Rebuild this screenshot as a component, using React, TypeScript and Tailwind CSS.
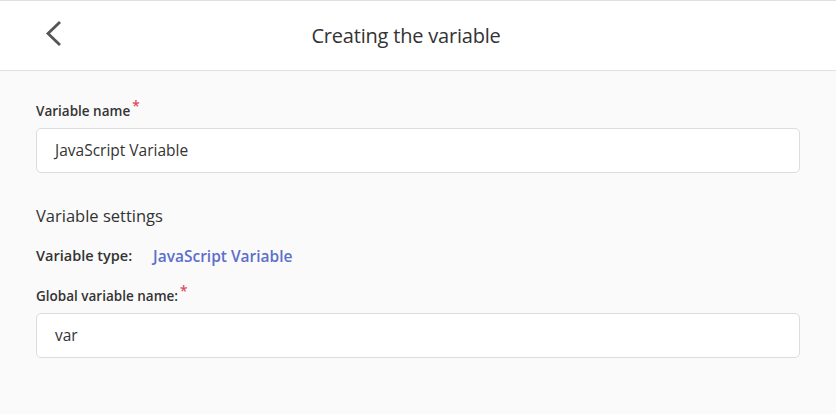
import React from "react";

export default function App() {
  const font = { fontFamily: '"Source Sans Pro", "Open Sans", "Noto Sans", sans-serif' };
  return (
    <div className="w-[836px] h-[414px] bg-[#fafafa] text-[#333]" style={font}>
      <div className="h-[71px] bg-white border-t border-b border-[#e0e0e0] flex items-center relative">
        <button className="absolute left-[44px] top-[20px] w-[18px] h-[26px] flex items-center justify-center">
          <svg width="18" height="26" viewBox="0 0 18 26" fill="none">
            <path d="M15 2 L4 12.5 L15 23" stroke="#555" strokeWidth="2.8" strokeLinecap="square" />
          </svg>
        </button>
        <div className="w-full text-center pr-[24px] text-[20px] text-[#333] tracking-[-0.2px]">Creating the variable</div>
      </div>
      <div className="px-[36px] pt-[30px]">
        <div className="text-[13.5px] font-semibold text-[#333] leading-[20px] mb-[7px]">
          Variable name<span className="text-[#e0475b] ml-[2px] relative top-[-5px]">*</span>
        </div>
        <div className="h-[45px] bg-white border border-[#dcdcdc] rounded-[5px] flex items-center px-[18px] text-[15.5px] text-[#333]">
          JavaScript Variable
        </div>
        <div className="mt-[31px] text-[16.5px] font-medium leading-[24px]">Variable settings</div>
        <div className="mt-[18px] flex items-center text-[14.5px] font-semibold leading-[20px]">
          <span className="w-[117px]">Variable type:</span>
          <span className="text-[#5c6fcb] text-[15.5px]">JavaScript Variable</span>
        </div>
        <div className="mt-[20px] text-[13.5px] font-semibold leading-[20px] mb-[7px]">
          Global variable name:<span className="text-[#e0475b] ml-[2px] relative top-[-5px]">*</span>
        </div>
        <div className="h-[45px] bg-white border border-[#dcdcdc] rounded-[5px] flex items-center px-[18px] text-[15.5px] text-[#333]">
          var
        </div>
      </div>
    </div>
  );
}
